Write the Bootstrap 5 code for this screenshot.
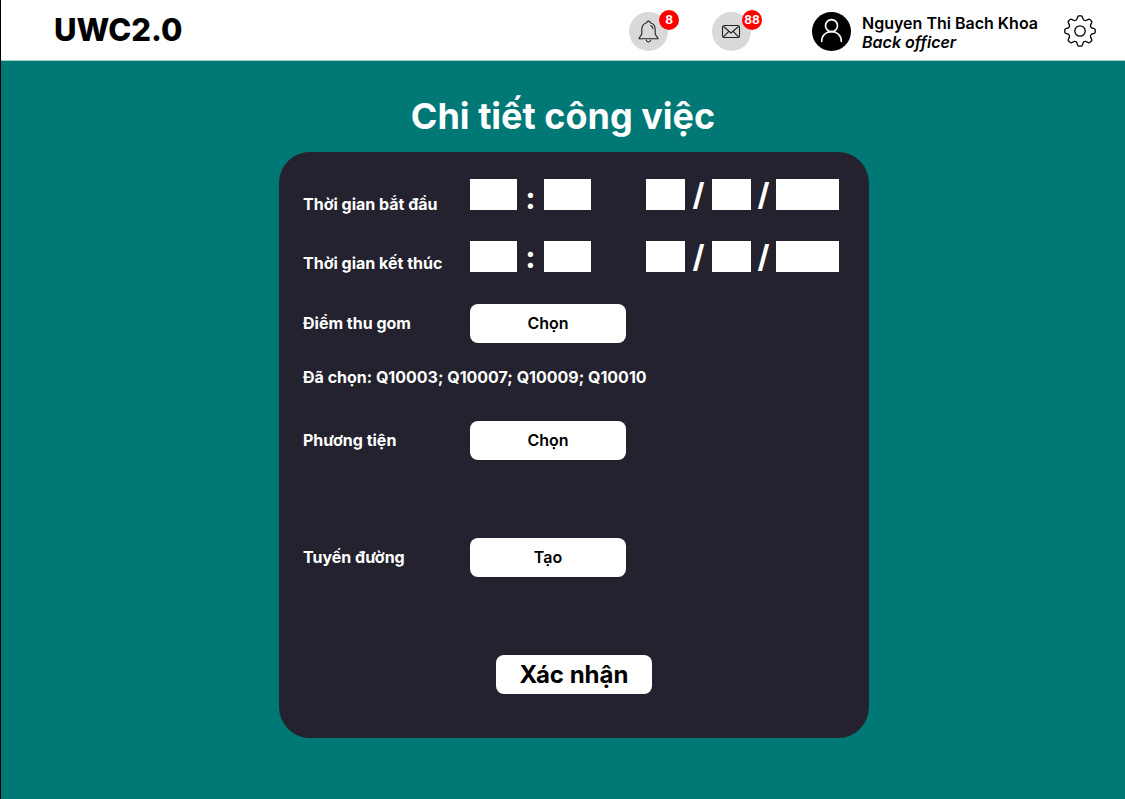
<!DOCTYPE html>
<html lang="vi">
<head>
<meta charset="utf-8">
<meta name="viewport" content="width=device-width, initial-scale=1">
<title>UWC2.0 – Chi tiết công việc</title>
<link href="https://cdn.jsdelivr.net/npm/bootstrap@5.3.0/dist/css/bootstrap.min.css" rel="stylesheet">
<style>
  body { font-family: Inter, "Liberation Sans", sans-serif; background: #007976; color: #000; border-left: 1px solid #000; min-height: 100vh; }
  .topbar { min-height: 61px; padding: 2px 29px 0 53px; border-bottom: 1px solid #a3cfce; }
  .brand-name { font-size: 31px; line-height: 40px; font-weight: 800; color: #000; padding-bottom: 2px; }
  .round-btn { width: 39px; height: 39px; background: #d9d9d9; }
  .count-dot { top: -2px; left: 30px; width: 20px; height: 20px; background: #f00; color: #fff; font-size: 12px; line-height: 20px; font-weight: 700; }
  .notices { gap: 44px; margin-right: 61px; }
  .user-text { font-size: 16px; line-height: 19px; font-weight: 600; margin: 3px 26px 0 11px; }
  .page-title { font-size: 36px; line-height: 44px; font-weight: 700; margin: 33px 0 14px; }
  .panel-wrap { padding-left: 22px; }
  .panel { max-width: 590px; padding: 27px 24px 44px; border-radius: 31px; background: #23222e; color: #fff; font-size: 16px; line-height: 20px; font-weight: 700; }
  .field-name { width: 167px; flex: none; padding-bottom: 2px; }
  .when { min-height: 36px; margin-bottom: 26px; --drop: 15px; }
  .when-end { margin-bottom: 27px; --drop: 12px; }
  .when .field-name { margin-top: var(--drop); padding: 0; }
  .digits { height: 31px; width: 47px; padding: 0 4px; border: 0; border-radius: 0; background: #fff; text-align: center; flex: none; }
  .digits-2 { width: 39px; }
  .digits-4 { width: 63px; }
  .date-part { margin-left: 55px; }
  .sep { width: 27px; font-size: 31px; line-height: 32px; text-align: center; }
  .sep-colon { margin-top: calc(var(--drop) - 12px); }
  .sep-last { width: 25px; }
  .pick { width: 156px; height: 39px; padding: 0 0 2px; border: 0; border-radius: 8px; background: #fff; color: #000; font-size: 16px; line-height: 20px; font-weight: 600; }
  .pick:hover { background: #e8e8e8; }
  .confirm { padding: 0; font-size: 24px; font-weight: 700; }
  .chosen { margin: 24px 0 34px; }
  .gap-route { margin-top: 78px; }
</style>
</head>
<body>
<header class="topbar bg-white d-flex align-items-center">
  <a href="#" class="brand-name text-decoration-none me-auto">UWC2.0</a>
  <div class="notices d-flex">
    <button type="button" class="round-btn btn rounded-circle border-0 p-0 position-relative" aria-label="Thông báo">
      <svg width="39" height="39" viewBox="0 0 39 39" fill="none" stroke="#222" stroke-width="1.1" stroke-linecap="round" stroke-linejoin="round" class="d-block">
        <path d="M17.800 10.800c0-2.200 3.400-2.200 3.400 0c3.800.8 5 3.600 5 7v3.700c0 2 2.800 3.500 2.800 5.300H10c0-1.800 2.800-3.300 2.800-5.300v-3.700c0-3.400 1.200-6.200 5-7z"/>
        <path d="M17.300 28.200c.5 2.300 3.900 2.300 4.400 0M21.800 13.500c1.400.7 2 1.700 2.200 3.300"/>
      </svg>
      <span class="count-dot position-absolute rounded-circle">8</span>
    </button>
    <button type="button" class="round-btn btn rounded-circle border-0 p-0 position-relative" aria-label="Hộp thư">
      <svg width="39" height="39" viewBox="0 0 39 39" fill="none" stroke="#222" stroke-width="1.1" stroke-linejoin="round" class="d-block">
        <rect x="10.500" y="13.500" width="17" height="12" rx="2"/>
        <path d="M11.500 14.500l7.500 6.500l7.500-6.500M11.500 24.800l5.300-5.500M26.500 24.800l-5.300-5.500"/>
      </svg>
      <span class="count-dot position-absolute rounded-circle">88</span>
    </button>
  </div>
  <svg width="39" height="39" viewBox="0 0 39 39" fill="none" stroke="#fff" stroke-width="1.700" stroke-linecap="round" aria-hidden="true">
    <circle cx="19.500" cy="19.500" r="19.500" fill="#000" stroke="none"/>
    <circle cx="19.500" cy="13.700" r="6"/>
    <path d="M9.700 29.300c0-6 4.200-9.600 9.800-9.600s9.800 3.600 9.800 9.600"/>
  </svg>
  <div class="user-text text-nowrap">Nguyen Thi Bach Khoa<br><em>Back officer</em></div>
  <button type="button" class="btn border-0 p-0" aria-label="Cài đặt">
    <svg width="32" height="32" viewBox="-16 -16 32 32" fill="none" stroke="#000" stroke-width="1.300" stroke-linejoin="round" class="d-block">
      <circle r="5.200"/>
      <path d="M-3.200-11.600L-2.300-14.200Q-2-15.200-1-15.200H1Q2-15.200 2.300-14.200L3.200-11.600Q4.500-10 5.900-10.500L8.400-11.700Q9.300-12.100 10-11.400L11.400-10Q12.100-9.300 11.700-8.400L10.500-5.900Q10-4.500 11.600-3.200L14.200-2.300Q15.200-2 15.200-1V1Q15.200 2 14.200 2.300L11.600 3.200Q10 4.500 10.500 5.900L11.700 8.400Q12.100 9.300 11.400 10L10 11.400Q9.300 12.100 8.400 11.700L5.900 10.500Q4.500 10 3.200 11.600L2.300 14.200Q2 15.200 1 15.200H-1Q-2 15.200-2.300 14.200L-3.200 11.600Q-4.500 10-5.900 10.500L-8.400 11.700Q-9.300 12.100-10 11.400L-11.400 10Q-12.100 9.300-11.700 8.400L-10.500 5.900Q-10 4.500-11.600 3.200L-14.200 2.300Q-15.200 2-15.200 1V-1Q-15.200-2-14.200-2.300L-11.600-3.200Q-10-4.500-10.500-5.900L-11.700-8.400Q-12.100-9.300-11.400-10L-10-11.400Q-9.300-12.100-8.400-11.700L-5.900-10.500Q-4.500-10-3.200-11.600Z"/>
    </svg>
  </button>
</header>

<main>
  <h1 class="page-title text-center text-white">Chi tiết công việc</h1>
  <div class="panel-wrap">
    <form class="panel mx-auto">
      <div class="when d-flex align-items-start" role="group" aria-labelledby="start-name">
        <label class="field-name" id="start-name" for="start-hour">Thời gian bắt đầu</label>
        <input class="digits" id="start-hour" aria-label="Giờ bắt đầu" maxlength="2">
        <span class="sep sep-colon">:</span>
        <input class="digits" aria-label="Phút bắt đầu" maxlength="2">
        <input class="digits digits-2 date-part" aria-label="Ngày bắt đầu" maxlength="2">
        <span class="sep">/</span>
        <input class="digits digits-2" aria-label="Tháng bắt đầu" maxlength="2">
        <span class="sep sep-last">/</span>
        <input class="digits digits-4" aria-label="Năm bắt đầu" maxlength="4">
      </div>
      <div class="when when-end d-flex align-items-start" role="group" aria-labelledby="end-name">
        <label class="field-name" id="end-name" for="end-hour">Thời gian kết thúc</label>
        <input class="digits" id="end-hour" aria-label="Giờ kết thúc" maxlength="2">
        <span class="sep sep-colon">:</span>
        <input class="digits" aria-label="Phút kết thúc" maxlength="2">
        <input class="digits digits-2 date-part" aria-label="Ngày kết thúc" maxlength="2">
        <span class="sep">/</span>
        <input class="digits digits-2" aria-label="Tháng kết thúc" maxlength="2">
        <span class="sep sep-last">/</span>
        <input class="digits digits-4" aria-label="Năm kết thúc" maxlength="4">
      </div>
      <div class="d-flex align-items-center">
        <label class="field-name" for="pick-point">Điểm thu gom</label>
        <button type="button" class="btn pick" id="pick-point">Chọn</button>
      </div>
      <p class="chosen">Đã chọn: Q10003; Q10007; Q10009; Q10010</p>
      <div class="d-flex align-items-center">
        <label class="field-name" for="pick-vehicle">Phương tiện</label>
        <button type="button" class="btn pick" id="pick-vehicle">Chọn</button>
      </div>
      <div class="gap-route d-flex align-items-center">
        <label class="field-name" for="make-route">Tuyến đường</label>
        <button type="button" class="btn pick" id="make-route">Tạo</button>
      </div>
      <div class="gap-route text-center">
        <button type="submit" class="btn pick confirm">Xác nhận</button>
      </div>
    </form>
  </div>
</main>
<script src="https://cdn.jsdelivr.net/npm/bootstrap@5.3.0/dist/js/bootstrap.bundle.min.js"></script>
</body>
</html>
